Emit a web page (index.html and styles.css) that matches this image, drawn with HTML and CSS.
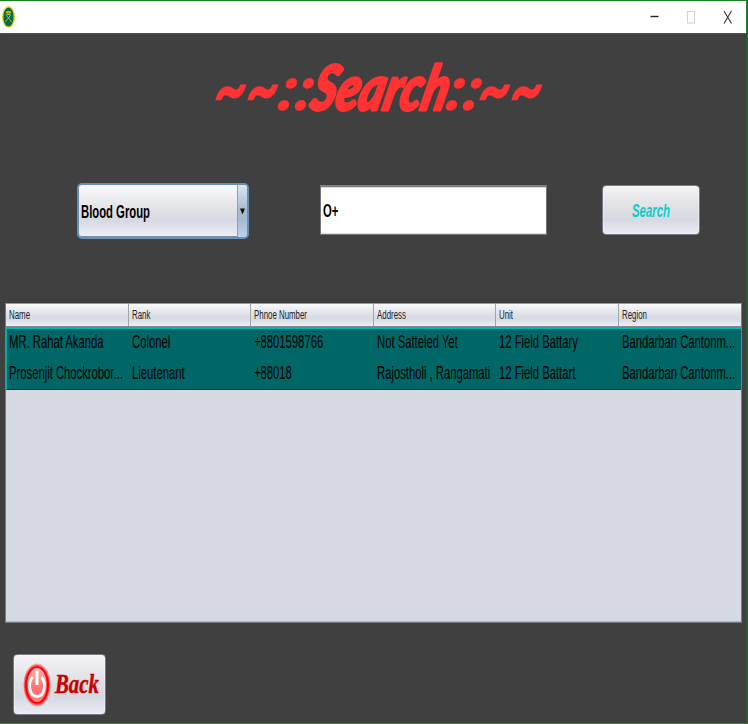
FILE: index.html
```html
<!DOCTYPE html>
<html lang="en">
<head>
<meta charset="utf-8">
<title>Search</title>
<link rel="stylesheet" href="styles.css">
</head>
<body>
<div class="window">
  <header class="titlebar">
    <svg class="emblem" width="13" height="22" viewBox="0 0 13 22">
      <ellipse cx="6.5" cy="11" rx="5.8" ry="10.2" fill="#006a55" stroke="#e6dc10" stroke-width="1.3"/>
      <path d="M4 6.8Q6.5 4.8 9 6.8M5 8.2h3" fill="none" stroke="#e0c020" stroke-width="1.5"/>
      <path d="M4 8.5L9.6 16M9 8.5L3.4 16" fill="none" stroke="#a8b830" stroke-width="1"/>
    </svg>
    <svg class="controls" width="84" height="16" viewBox="0 0 84 16">
      <path d="M0.5 7.5h8" stroke="#222" stroke-width="1.4"/>
      <rect x="37.5" y="2.5" width="7" height="11.5" fill="none" stroke="#d2d2d2"/>
      <path d="M74 2L81.5 14.5M81.5 2L74 14.5" stroke="#333" stroke-width="1.1"/>
    </svg>
  </header>
  <main class="content">
    <svg class="heading" width="340" height="70" viewBox="0 0 340 70" role="heading">
      <g transform="translate(0 57) skewX(-14)">
        <text class="tilde" x="-3" y="4" textLength="64" lengthAdjust="spacingAndGlyphs">~~</text>
        <text class="colon" x="62" y="-2" textLength="34" lengthAdjust="spacingAndGlyphs">::</text>
        <text class="word" x="95" y="-2" textLength="136" lengthAdjust="spacingAndGlyphs">Search</text>
        <text class="colon" x="230" y="-2" textLength="34" lengthAdjust="spacingAndGlyphs">::</text>
        <text class="tilde" x="261" y="4" textLength="64" lengthAdjust="spacingAndGlyphs">~~</text>
      </g>
    </svg>
    <div class="filters">
      <div class="select"><span class="narrow strong">Blood Group</span><div class="arrow"><svg width="5" height="7" viewBox="0 0 5 7"><path d="M0 0.5h5L2.5 6.5z" fill="#111"/></svg></div></div>
      <div class="field"><span class="narrow strong">O+</span></div>
      <div class="button search"><span class="narrow">Search</span></div>
    </div>
    <div class="table">
      <div class="row head">
        <div><span class="narrow">Name</span></div><div><span class="narrow">Rank</span></div><div><span class="narrow">Phnoe Number</span></div><div><span class="narrow">Address</span></div><div><span class="narrow">Unit</span></div><div><span class="narrow">Region</span></div>
      </div>
      <div class="rows">
        <div class="row">
          <div><span class="narrow">MR. Rahat Akanda</span></div><div><span class="narrow">Colonel</span></div><div><span class="narrow">+8801598766</span></div><div><span class="narrow">Not Satteled Yet</span></div><div><span class="narrow">12 Field Battary</span></div><div><span class="narrow">Bandarban Cantonm...</span></div>
        </div>
        <div class="row">
          <div><span class="narrow">Prosenjit Chockrobor...</span></div><div><span class="narrow">Lieutenant</span></div><div><span class="narrow">+88018</span></div><div><span class="narrow">Rajostholi , Rangamati</span></div><div><span class="narrow">12 Field Battart</span></div><div><span class="narrow">Bandarban Cantonm...</span></div>
        </div>
      </div>
    </div>
    <div class="button back">
      <svg width="28" height="44" viewBox="0 0 28 44">
        <defs>
          <radialGradient id="glow"><stop offset=".82" stop-color="#ff0000"/><stop offset="1" stop-color="#ff0000" stop-opacity="0"/></radialGradient>
          <linearGradient id="disc" x1="0" y1="0" x2="0" y2="1"><stop offset="0" stop-color="#ffb0b0"/><stop offset=".6" stop-color="#ff7070"/><stop offset="1" stop-color="#ff8080"/></linearGradient>
        </defs>
        <ellipse cx="14" cy="22" rx="14" ry="22" fill="url(#glow)"/>
        <ellipse cx="14" cy="22" rx="9.8" ry="17" fill="url(#disc)"/>
        <path d="M9.6 14C4.500 20 6 33.500 14 33.500S23.500 20 18.400 14" fill="none" stroke="#fff" stroke-width="2.8"/>
        <path d="M14 7.500v14.500" stroke="#fff" stroke-width="3"/>
      </svg>
      <span class="back-label">Back</span>
    </div>
  </main>
</div>
</body>
</html>
```
FILE: styles.css
```css
* { box-sizing: border-box; }
body { margin: 0; font-family: "Liberation Sans", Arial, sans-serif; color: #000; }
.window {
  width: 748px; height: 724px; overflow: hidden;
  display: flex; flex-direction: column;
  background: #404040;
  border-top: 1px solid #16801c;
  border-right: 1px solid #40601c;
  border-bottom: 1px solid #2b8430;
}
.titlebar {
  height: 32px; flex: none; background: #fff;
  border-right: 1px solid #258030;
  display: flex; justify-content: space-between;
  padding: 5px 12px 0 2px;
}
.controls { margin-top: 3px; }
.content {
  flex: 1; display: flex; flex-direction: column; align-items: flex-start;
  border-top: 1px solid #555; border-right: 1px solid #28533c;
}
.heading { margin: 21px 0 0 213px; overflow: visible; flex: none; }
.heading text { fill: #ff3333; stroke: #ff3333; stroke-linejoin: round; font-family: Lato, sans-serif; font-weight: 900; font-style: italic; }
.heading .word { font-size: 62px; stroke-width: 3px; }
.heading .colon { font-size: 63px; stroke-width: .5px; }
.heading .tilde { font-size: 80px; stroke-width: 0; }
.narrow { display: inline-block; white-space: nowrap; transform: scaleX(.643); transform-origin: 0 50%; }
.strong { font-weight: bold; font-size: 18px; transform: scaleX(.627); }
.filters { display: flex; align-items: flex-start; margin: 58px 0 0 77px; }
.select {
  width: 172px; height: 56px; display: flex; align-items: center; justify-content: space-between;
  border: 2px solid #6590b8; border-radius: 5px; padding-left: 2px;
  background: linear-gradient(#fafafc, #e0e1e6 50%, #d6d9e1 68%, #edf0f8);
  box-shadow: inset 0 -1px #83909f;
}
.select .narrow, .field .narrow { margin-top: 2px; }
.arrow {
  width: 10px; height: 52px; flex: none; display: flex; align-items: center; justify-content: center;
  border-left: 1px solid #899fb2; border-radius: 0 3px 3px 0;
  background: linear-gradient(#dce6ee, #a5bacd 50%, #a4bad0 66%, #bcd3e8);
}
.field {
  width: 227px; height: 50px; margin: 2px 0 0 71px; display: flex; align-items: center;
  background: #fff; border: 1px solid #777; border-top: 2px solid #817f81; padding-left: 2px;
  box-shadow: inset 0 1px #d8d8d8, inset 0 -1px #ddd;
}
.button {
  border: 1px solid #777982; border-radius: 4px;
  background: linear-gradient(#f4f4f6, #dfe0e4 45%, #d6d9e1 70%, #e9ecf4);
  box-shadow: inset 0 0 0 1px rgba(255,255,255,.3);
  display: flex; align-items: center;
}
.search { width: 98px; height: 50px; margin: 2px 0 0 55px; padding-left: 29px; padding-top: 3px; color: #10caca; font: italic bold 18px "Liberation Sans", sans-serif; }
.search .narrow { transform: scaleX(.633); }
.table {
  width: 737px; height: 320px; margin: 64px 0 0 5px; flex: none;
  background: #d6d9e1; border: 1px solid #777b84; border-top-color: #9397a0;
  box-shadow: inset 0 -1px #b2b5bd;
}
.row { display: grid; grid-template-columns: 122px 122px 123px 122px 123px 1fr; align-items: center; font-size: 17.5px; }
.row > div { min-width: 0; padding-left: 3px; }
.rows { background: #006766; border-top: 2px solid #00b9b5; border-bottom: 1px solid #003b40; border-left: 1px solid #00a8a7; }
.rows .row { grid-template-columns: 121px 122px 123px 122px 123px 1fr; height: 30px; line-height: 26px; align-items: start; }
.rows .row:last-child { line-height: 28px; }
.rows .row > div { padding-left: 2px; }
.rows .row > div + div { padding-left: 4px; }
.head {
  height: 23px; font-size: 12.5px; color: #222;
  background: linear-gradient(#fafafb, #dedfe5 50%, #d8dbe3 70%, #eceef5);
  border-bottom: 1px solid #8b858b;
}
.head > div { height: 22px; display: flex; align-items: center; }
.head > div + div { border-left: 1px solid #a2a5ae; }
.head .narrow { transform: scaleX(.63); }
.back { width: 93px; height: 61px; margin: 31px 0 0 13px; padding-left: 9px; flex: none; }
.back svg { flex: none; }
.back-label {
  font: italic bold 27px "Liberation Serif", serif; color: #c80000; margin-left: 4px;
  transform: scaleX(.77); transform-origin: 0 50%; -webkit-text-stroke: .5px #c80000;
}
```
